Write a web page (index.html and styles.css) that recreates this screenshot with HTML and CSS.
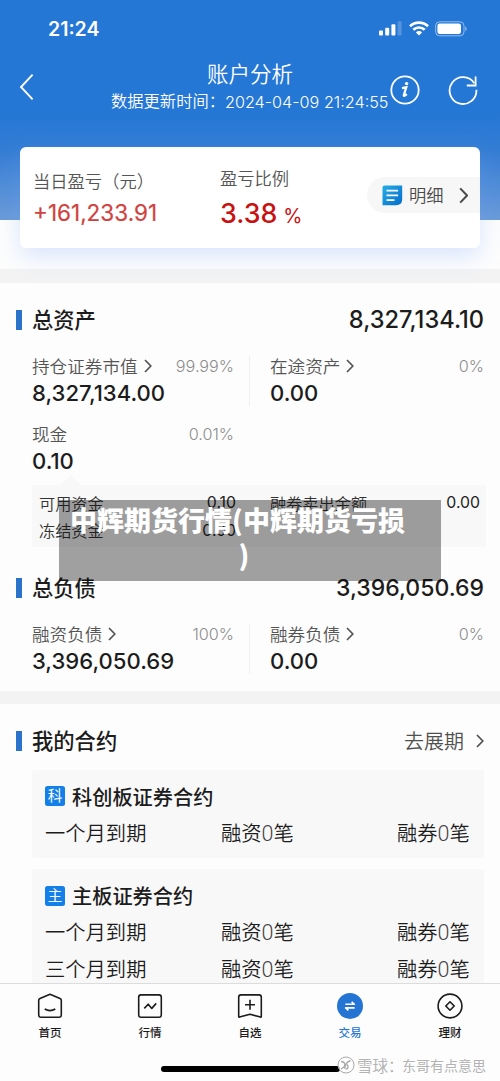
FILE: index.html
```html
<!DOCTYPE html>
<html lang="zh-CN">
<head>
<meta charset="utf-8">
<title>账户分析</title>
<link rel="stylesheet" href="styles.css">
</head>
<body>
<svg class="defs" width="0" height="0"><defs>
<symbol id="chev" viewBox="0 0 8 14"><path d="M1 1l5.8 6L1 13" fill="none" stroke="currentColor" stroke-width="1.7"/></symbol>
</defs></svg>
<main class="phone">
  <header class="hero">
    <div class="status">
      <span class="clock">21:24</span>
      <div class="signals">
        <svg width="24" height="15" viewBox="0 0 24 15" fill="#fff"><rect x="0" y="9.5" width="4" height="5" rx="1"/><rect x="6.2" y="6.7" width="4" height="7.8" rx="1"/><rect x="12.4" y="3.3" width="4" height="11.2" rx="1"/><rect x="18.6" y=".3" width="4" height="14.2" rx="1" opacity=".22"/></svg>
        <svg width="20" height="15" viewBox="0 0 20 15" fill="none" stroke="#fff" stroke-width="2.7"><path d="M1 5.2a13 13 0 0 1 18 0"/><path d="M4.3 8.8a8.2 8.2 0 0 1 11.4 0"/><path d="M10 14.4L6.9 11.4a4.4 4.4 0 0 1 6.2 0z" fill="#fff" stroke="none"/></svg>
        <svg width="33" height="16" viewBox="0 0 33 16"><rect x=".6" y=".8" width="28.4" height="14" rx="4" fill="none" stroke="#fff" stroke-opacity=".5" stroke-width="1"/><rect x="2.4" y="2.6" width="23.6" height="10.4" rx="2.3" fill="#fff"/><path d="M30.4 5.5c1.6.6 1.6 4 0 4.6z" fill="#fff" opacity=".55"/></svg>
      </div>
    </div>
    <div class="nav">
      <svg class="back" width="16" height="28" viewBox="0 0 16 28"><path d="M13.6 1.7L2 14l11.6 12.3" fill="none" stroke="#fff" stroke-width="1.9"/></svg>
      <div class="heading">
        <h1>账户分析</h1>
        <p>数据更新时间：<span class="stamp">2024-04-09 21:24:55</span></p>
      </div>
      <div class="actions">
        <svg width="30" height="30" viewBox="0 0 30 30"><circle cx="15" cy="15" r="13.7" fill="none" stroke="#fff" stroke-width="1.8"/><circle cx="16.6" cy="8.6" r="1.7" fill="#fff"/><path d="M12 13.200l4.300-.9-2.500 7.800c-.3 1.200.6 1.200 3-.9" fill="none" stroke="#fff" stroke-width="2.200"/></svg>
        <svg width="30" height="30" viewBox="0 0 30 30" fill="none" stroke="#fff" stroke-width="1.8"><path d="M28.400 14.800A13.400 13.400 0 1 1 26.300 8.300"/><path d="M27.600 1.500v9h-8.800"/></svg>
      </div>
    </div>
  </header>
  <section class="summary">
    <div class="daily"><span class="lab">当日盈亏（元）</span><span class="gain">+161,233.91</span></div>
    <div class="ratio"><span class="lab">盈亏比例</span><span class="rate">3.38<small>%</small></span></div>
    <a class="detail">
      <svg width="21" height="21" viewBox="0 0 21 21"><defs><linearGradient id="doc" x2="1" y2="1"><stop stop-color="#25aee6"/><stop offset="1" stop-color="#056bc9"/></linearGradient></defs><path d="M2.5.5H20.2V14q0 6.2-6.2 6.2H.5V2.5q0-2 2-2z" fill="url(#doc)"/><path d="M4.5 5.6h11.6M4.5 10.4h11.6M4.5 15.2h8" stroke="#fff" stroke-width="1.7"/></svg>
      <span>明细</span>
      <svg class="go" width="9.500" height="17"><use href="#chev"/></svg>
    </a>
  </section>

  <section class="block assets">
    <div class="title"><h2>总资产</h2><b class="n-assets">8,327,134.10</b></div>
    <div class="cols">
      <div class="col">
        <div class="line"><span>持仓证券市值</span><svg width="8" height="14"><use href="#chev"/></svg><em>99.99%</em></div>
        <strong class="v-hold">8,327,134.00</strong>
      </div>
      <div class="col">
        <div class="line"><span>在途资产</span><svg width="8" height="14"><use href="#chev"/></svg><em>0%</em></div>
        <strong>0.00</strong>
      </div>
    </div>
    <div class="cols cash">
      <div class="col plain">
        <div class="line"><span>现金</span><em>0.01%</em></div>
        <strong>0.10</strong>
      </div>
    </div>
    <div class="funds">
      <div><span>可用资金</span><i>0.10</i></div>
      <div><span>融券卖出金额</span><i>0.00</i></div>
      <div><span>冻结资金</span><i>0.00</i></div>
      <div class="banner"><p>中辉期货行情(中辉期货亏损</p><p class="tail">)</p></div>
    </div>
  </section>

  <section class="block debts">
    <div class="title"><h2>总负债</h2><b class="n-debts">3,396,050.69</b></div>
    <div class="cols">
      <div class="col">
        <div class="line"><span>融资负债</span><svg width="8" height="14"><use href="#chev"/></svg><em>100%</em></div>
        <strong class="v-debt">3,396,050.69</strong>
      </div>
      <div class="col">
        <div class="line"><span>融券负债</span><svg width="8" height="14"><use href="#chev"/></svg><em>0%</em></div>
        <strong>0.00</strong>
      </div>
    </div>
  </section>

  <section class="block deals">
    <div class="title"><h2>我的合约</h2><a class="extend">去展期<svg width="8" height="14"><use href="#chev"/></svg></a></div>
    <article class="deal">
      <h3><span class="tag">科</span>科创板证券合约</h3>
      <div class="term"><span>一个月到期</span><span>融资<u>0</u>笔</span><span>融券<u>0</u>笔</span></div>
    </article>
    <article class="deal">
      <h3><span class="tag">主</span>主板证券合约</h3>
      <div class="term"><span>一个月到期</span><span>融资<u>0</u>笔</span><span>融券<u>0</u>笔</span></div>
      <div class="term"><span>三个月到期</span><span>融资<u>0</u>笔</span><span>融券<u>0</u>笔</span></div>
    </article>
  </section>

  <footer class="tabs">
    <a><svg viewBox="0 0 26 26"><path d="M13 1.2L23 5.6q1.3.6 1.3 2V22q0 2.300-2.300 2.300H4Q1.700 24.300 1.700 22V7.600q0-1.400 1.300-2z"/><path d="M7.700 16q5.300 3.200 10.600 0"/></svg>首页</a>
    <a><svg viewBox="0 0 26 26"><rect x="1.700" y="1.900" width="22.600" height="22.400" rx="2.300"/><path d="M7.300 15.400l3.900-4.200 3.600 4.200 4.400-5"/></svg>行情</a>
    <a><svg viewBox="0 0 26 26"><path d="M1.700 23.600V4.200q0-2.300 2.300-2.300H22q2.300 0 2.300 2.300v19.400q0 .7-.8.500L13 21.200 2.500 24.100q-.8.200-.8-.5z"/><path d="M8 11.800h10M13 6.800v10"/></svg>自选</a>
    <a class="on"><svg viewBox="0 0 26 26"><circle cx="13" cy="13" r="13" fill="currentColor" stroke="none"/><path d="M8.400 11.300h9l-2.800-2.400M17.600 14.900h-9l2.800 2.400" stroke="#fff"/></svg>交易</a>
    <a><svg viewBox="0 0 26 26"><circle cx="13" cy="13" r="11.900"/><path d="M13 8.800l4.200 4.200-4.200 4.200L8.800 13z"/></svg>理财</a>
    <div class="home-bar"></div>
    <div class="mark"><svg width="18" height="18" viewBox="0 0 18 18"><circle cx="9" cy="9" r="8" fill="#fff" fill-opacity=".7" stroke="#aaa"/><path d="M4 5.500q5 .5 3.500 5L4 13M8 13q-.5-6 5.500-8.500M10 8.500q2.500 3-1 5" fill="none" stroke="#aaa" stroke-width="1.400"/></svg><span class="brand">雪球：</span><span>东哥有点意思</span></div>
  </footer>
</main>
</body>
</html>
```
FILE: styles.css
```css
* { box-sizing: border-box; margin: 0; padding: 0; }
body { font-family: Inter, "Noto Sans CJK SC", sans-serif; color: #1c1c1c; background: #fdfdfd; }
.defs { position: absolute; }
.phone { width: 500px; height: 1081px; overflow: hidden; position: relative; display: flex; flex-direction: column; }
svg { flex: none; display: block; }
h1, h2, h3 { font-weight: 500; }

.hero { height: 220px; flex: none; color: #fff; background: linear-gradient(#2577d5 0, #2577d5 115px, #347dd4 150px, #6b9bd9 220px); }
.status { height: 57px; padding: 0 32px 0 48px; display: flex; justify-content: space-between; align-items: center; }
.clock { font-size: 19.500px; font-weight: 600; }
.signals { display: flex; gap: 6px; align-items: center; }
.nav { height: 62px; padding: 0 21px 0 19px; display: flex; align-items: flex-start; }
.back { margin-top: 16px; }
.heading { width: 278px; margin-left: 76px; text-align: center; white-space: nowrap; }
.heading h1 { font-size: 21.500px; line-height: 28px; font-weight: 350; padding-top: 3px; height: 31px; }
.heading p { font-size: 16.300px; line-height: 26px; font-weight: 350; text-align: left; display: flex; }
.stamp { font-size: 16.200px; padding-top: 1px; }
.actions { display: flex; gap: 28px; margin: 18px 0 0 1px; }

.summary { width: 460px; height: 101px; margin: -73px 20px 0; flex: none; display: flex; border-radius: 6px; background: #fff; box-shadow: 0 8px 24px rgba(120, 165, 255, .28); position: relative; padding-left: 13px; }
.daily, .ratio { display: flex; flex-direction: column; white-space: nowrap; }
.daily { width: 187px; padding-top: 21px; }
.ratio { width: 147px; padding-top: 18px; }
.lab { font-size: 17.300px; line-height: 28px; font-weight: 350; color: #555; }
.gain { font-size: 22.500px; line-height: 34px; color: #d04240; -webkit-text-stroke: .2px; }
.rate { font-size: 26.800px; line-height: 40px; font-weight: 500; color: #c81212; }
.rate small { font-size: 19.500px; margin-left: 6px; font-weight: 400; }
.detail { width: 113px; height: 36px; margin-top: 30px; border-radius: 18px 0 0 18px; background: #f7f7f7; display: flex; align-items: center; padding-left: 15px; font-size: 17.300px; font-weight: 350; color: #4a4a4a; white-space: nowrap; }
.detail span { margin: 0 15px 0 6px; padding-bottom: 1px; }

.block { padding: 0 16px; border-top: 14px solid #f3f3f3; flex: none; }
.assets { margin-top: 21px; height: 281px; }
.debts { border: 0; height: 141px; }
.deals { height: 292px; overflow: hidden; border-top-width: 13px; }
.title { display: flex; align-items: center; justify-content: space-between; height: 74px; }
.title h2 { font-size: 21.300px; display: flex; align-items: center; line-height: 30px; }
.title h2::before { content: ""; width: 6px; height: 20px; margin-right: 10px; background: #2a72ca; }
.title b { font-size: 23px; font-weight: 500; line-height: 30px; }
.title .n-assets { font-size: 23.600px; }
.cols { display: grid; grid-template-columns: 218px 234px; padding-left: 16px; height: 69px; }
.col { height: 50px; padding-right: 0; }
.col:first-child { border-right: 1px solid #efefef; padding-right: 15px; }
.col:last-child:not(.plain) { padding-left: 20px; }
.col.plain { border: 0; padding-right: 16px; }
.line { display: flex; align-items: center; height: 20px; font-size: 17.600px; font-weight: 350; color: #555; white-space: nowrap; }
.line span { padding-bottom: 2px; }
.line svg { margin-left: 6px; }
.line em { margin-left: auto; font-style: normal; font-size: 16.200px; color: #8c8c8c; }
.col strong { display: block; font-size: 22.100px; font-weight: 500; line-height: 34px; }
.assets .title { height: 73px; }
.cash { margin-top: -1px; }
.funds { position: relative; margin-left: 16px; width: 454px; height: 62px; margin-top: -8px; padding: 4px 7px; background: #f8f8f8; border-radius: 3px; display: grid; grid-template-columns: 197px 209px; column-gap: 34px; grid-auto-rows: 27.500px; font-size: 16.200px; font-weight: 350; color: #333; white-space: nowrap; }
.funds > div { display: flex; justify-content: space-between; align-items: center; }
.funds > div:nth-child(2) { width: 210px; }
.funds i { font-style: normal; font-weight: 400; color: #222; font-size: 15.800px; }
.funds::before { content: ""; position: absolute; left: 29px; top: -10px; border: 10px solid transparent; border-top: 0; border-bottom-color: #f8f8f8; }
.funds > .banner { position: absolute; left: 27px; top: 15px; width: 382px; height: 81px; padding: 2px 25px 0 0; background: rgba(0, 0, 0, .37); color: #fff; font: 900 27px/35px "Noto Sans CJK SC", sans-serif; display: block; text-align: center; }
.banner .tail { padding-left: 13px; }

.debts .title { height: 74px; padding-top: 2px; }
.debts .cols { height: 50px; }
.deals .title { height: 73px; }
.extend { display: flex; align-items: center; gap: 12px; font-size: 20px; font-weight: 350; color: #505050; }
.deals .title + .deal { margin-top: -7.500px; }
.deal { margin: 0 0 11px 16px; width: 452px; padding: 13px 13px 6px; border-radius: 3px; background: #f8f8f8; white-space: nowrap; }
.deal h3 { display: flex; align-items: center; gap: 7px; height: 27px; font-size: 20.200px; margin-bottom: 6px; }
.deal h3 .tag { width: 20px; height: 20px; border-radius: 2.500px; background: #137fe8; color: #fff; font-size: 14.500px; line-height: 20px; text-align: center; font-weight: 400; }
.term { display: grid; grid-template-columns: 176px 176px auto; height: 36.500px; line-height: 36px; font-size: 20.300px; font-weight: 350; }
.term u { text-decoration: none; font: 300 21.500px/1 Roboto, sans-serif; color: #444; }

.tabs { position: relative; height: 98px; flex: none; border-top: 1px solid #dcdcdc; background: #fdfdfd; display: grid; grid-template-columns: repeat(5, 100px); align-items: start; }
.tabs a { display: flex; flex-direction: column; align-items: center; gap: 6px; padding-top: 9px; font-size: 11.500px; line-height: 17px; font-weight: 500; color: #1c1c1c; }
.tabs a svg { width: 26px; height: 26px; fill: none; stroke: currentColor; stroke-width: 1.600; stroke-linejoin: round; }
.tabs a.on { color: #2475d3; }
.home-bar { position: absolute; left: 161px; top: 82px; width: 179px; height: 6px; border-radius: 3px; background: #000; }
.mark { position: absolute; left: 337px; top: 71px; height: 20px; display: flex; align-items: center; font-size: 14px; color: #b3b3b3; white-space: nowrap; text-shadow: 0 1px 1px #fff; }
.mark .brand { font-size: 15.500px; margin-left: 2px; width: 45px; }
```
